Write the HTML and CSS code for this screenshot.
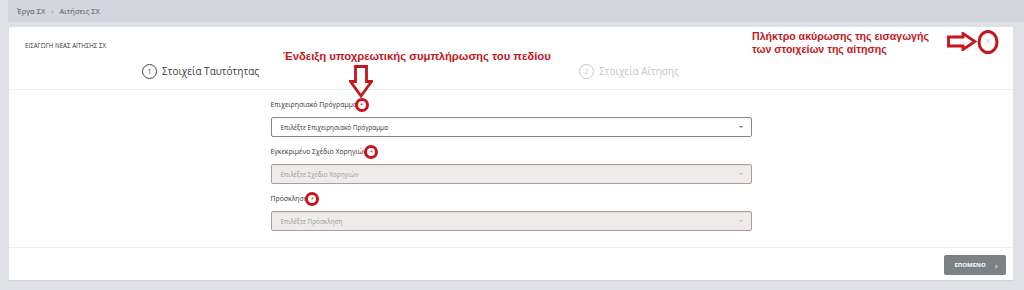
FILE: index.html
```html
<!DOCTYPE html>
<html>
<head>
  <title>Αιτήσεις ΣΧ</title>
  <link rel="stylesheet" href="styles.css">
</head>
<body>
  <div class="crumbs">
    <span>Έργα ΣΧ</span>
    <span class="crumb-sep">›</span>
    <span>Αιτήσεις ΣΧ</span>
  </div>

  <div class="card">
    <div class="card-head">
      <div class="head-top">
        <span class="card-title">ΕΙΣΑΓΩΓΗ ΝΕΑΣ ΑΙΤΗΣΗΣ ΣΧ</span>
        <button class="close-btn" type="button">×</button>
      </div>
      <div class="steps">
        <div class="step active"><span class="step-num">1</span>Στοιχεία Ταυτότητας</div>
        <div class="step"><span class="step-num">2</span>Στοιχεία Αίτησης</div>
      </div>
    </div>

    <form class="form">
      <div class="field">
        <label class="field-label">Επιχειρησιακό Πρόγραμμα <span class="req">*</span></label>
        <div class="select">Επιλέξτε Επιχειρησιακό Πρόγραμμα<span class="caret"></span></div>
      </div>
      <div class="field">
        <label class="field-label">Εγκεκριμένο Σχέδιο Χορηγιών <span class="req">*</span></label>
        <div class="select disabled">Επιλέξτε Σχέδιο Χορηγιών<span class="caret"></span></div>
      </div>
      <div class="field">
        <label class="field-label">Πρόσκληση <span class="req">*</span></label>
        <div class="select disabled">Επιλέξτε Πρόσκληση<span class="caret"></span></div>
      </div>
    </form>

    <div class="card-foot">
      <button class="next-btn" type="button">ΕΠΟΜΕΝΟ <span class="chev">›</span></button>
    </div>
  </div>

  <!-- annotations drawn over the screenshot -->
  <div class="note note-req">Ένδειξη υποχρεωτικής συμπλήρωσης του πεδίου</div>
  <svg class="arrow-down" width="24" height="33" viewBox="0 0 24 33">
    <path d="M6.5 1.5 H17.5 V16.5 H22.5 L12 31 L1.5 16.5 H6.5 Z" fill="none" stroke="#c4161c" stroke-width="2.8" stroke-linejoin="miter"/>
  </svg>

  <div class="note note-cancel">Πλήκτρο ακύρωσης της εισαγωγής<br>των στοιχείων της αίτησης</div>
  <svg class="arrow-right" width="30" height="19" viewBox="0 0 30 19">
    <path d="M1.5 5 H16 V1.5 L28 9.5 L16 17.5 V14 H1.5 Z" fill="none" stroke="#c4161c" stroke-width="2.8"/>
  </svg>
  <svg class="ring-cancel" width="24" height="26" viewBox="0 0 24 26">
    <ellipse cx="12" cy="13" rx="9" ry="10.5" fill="none" stroke="#c4161c" stroke-width="3"/>
  </svg>
</body>
</html>
```

FILE: styles.css
```css
body {
  margin: 0;
  background-color: #dfe1e6;
  font-family: "Open Sans", "Noto Sans", sans-serif;
  color: #333;
  position: relative;
  height: 290px;
  overflow: hidden;
}
.crumbs {
  margin-left: 8px;
  height: 22px;
  display: flex;
  align-items: center;
  gap: 6px;
  padding-left: 9px;
  background-color: #d3d6dc;
  font-size: 7.5px;
  color: #555;
}
.crumb-sep {
  color: #888;
}
.card {
  margin: 5px 11px 0 9px;
  background-color: #fff;
  box-shadow: 0 1px 1px rgba(0, 0, 0, 0.06);
}
.card-head {
  padding: 12px 16px 11px 16px;
}
.head-top {
  height: 12px;
  display: flex;
  align-items: center;
  justify-content: space-between;
}
.card-title {
  font-size: 6.2px;
  color: #333;
}
.close-btn {
  width: 18px;
  height: 16px;
  margin-top: -8px;
  padding: 0;
  border: none;
  background: none;
  color: #c9ccd6;
  font-size: 9px;
  line-height: 16px;
}
.steps {
  margin-top: 13px;
  height: 14px;
  display: flex;
  align-items: center;
  gap: 320px;
  padding-left: 117px;
}
.step {
  display: flex;
  align-items: center;
  gap: 5px;
  font-size: 10px;
  color: #c6c6c6;
}
.step.active {
  color: #3a3a3a;
}
.step-num {
  width: 13px;
  height: 13px;
  border: 1px solid #c6c6c6;
  border-radius: 50%;
  display: flex;
  align-items: center;
  justify-content: center;
  font-size: 7px;
}
.step.active .step-num {
  border-color: #444;
}
.form {
  padding: 9px calc((100% - 481px) / 2) 16px;
  border-top: 1px solid #efefef;
  border-bottom: 1px solid #efefef;
}
.field + .field {
  margin-top: 9px;
}
.field-label {
  display: block;
  height: 12px;
  line-height: 12px;
  margin-bottom: 6px;
  font-size: 6.9px;
  color: #333;
}
.req {
  position: relative;
  margin-left: 1px;
  color: #c4161c;
  font-size: 6px;
}
.req::after {
  content: "";
  position: absolute;
  left: 50%;
  top: 50%;
  width: 8px;
  height: 8px;
  margin: -7px 0 0 -7px;
  border: 3px solid #c4161c;
  border-radius: 50%;
}
.select {
  position: relative;
  height: 20px;
  box-sizing: border-box;
  display: flex;
  align-items: center;
  padding-left: 9px;
  border: 1px solid #8f8482;
  border-radius: 2px;
  background-color: #fff;
  font-size: 6.4px;
  color: #333;
  box-shadow: inset 0 1px 1px rgba(0, 0, 0, 0.05);
}
.select.disabled {
  background-color: #eeecea;
  color: #9a9a9a;
  border-color: #b19a98;
}
.caret {
  position: absolute;
  right: 8px;
  top: 8px;
  border-left: 2px solid transparent;
  border-right: 2px solid transparent;
  border-top: 2.5px solid #777;
}
.select.disabled .caret {
  border-top-color: #c2c2c2;
}
.card-foot {
  height: 32px;
  box-sizing: border-box;
  padding: 7px 7px 5px 0;
  display: flex;
  justify-content: flex-end;
}
.next-btn {
  width: 62px;
  height: 20px;
  padding: 0 0 0 2px;
  border: none;
  border-radius: 2px;
  background-color: #7c8087;
  color: #fff;
  font-family: "Open Sans", "Noto Sans", sans-serif;
  font-size: 6px;
  font-weight: bold;
  display: flex;
  align-items: center;
  justify-content: center;
  gap: 9px;
}
.chev {
  font-size: 8px;
  color: #d8dade;
}

/* red annotations over the page */
.note {
  position: absolute;
  font-family: "Liberation Sans", Arial, sans-serif;
  font-weight: bold;
  color: #c4161c;
}
.note-req {
  left: 283px;
  top: 50px;
  font-size: 11.3px;
  white-space: nowrap;
}
.note-cancel {
  left: 752px;
  top: 30px;
  font-size: 10.6px;
  line-height: 13px;
  white-space: nowrap;
}
.arrow-down {
  position: absolute;
  left: 349px;
  top: 65px;
}
.arrow-right {
  position: absolute;
  left: 947px;
  top: 32px;
}
.ring-cancel {
  position: absolute;
  left: 976px;
  top: 29px;
}
```
